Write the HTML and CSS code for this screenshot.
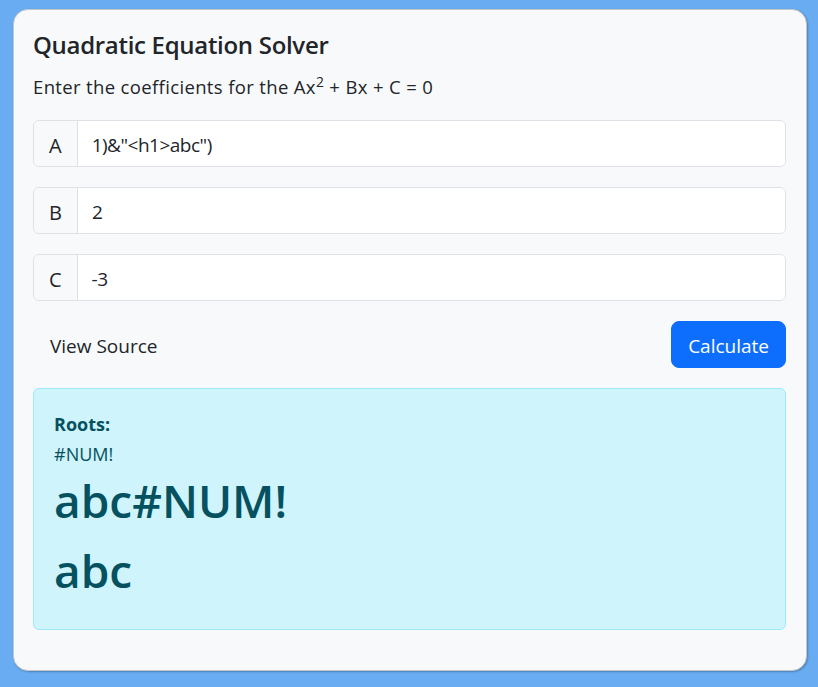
FILE: index.html
```html
<!DOCTYPE html>
<html lang="en">
<head>
<meta charset="utf-8">
<title>Quadratic Equation Solver</title>
<link rel="stylesheet" href="styles.css">
</head>
<body>
<main class="card">
  <h4 class="title">Quadratic Equation Solver</h4>
  <p class="subtitle">Enter the coefficients for the Ax<sup>2</sup> + Bx + C = 0</p>
  <form class="form">
    <div class="input-group">
      <span class="input-label">A</span>
      <input class="input" type="text" value="1)&amp;&quot;&lt;h1&gt;abc&quot;)">
    </div>
    <div class="input-group">
      <span class="input-label">B</span>
      <input class="input" type="text" value="2">
    </div>
    <div class="input-group">
      <span class="input-label">C</span>
      <input class="input" type="text" value="-3">
    </div>
    <div class="actions">
      <a class="btn btn-link" href="#">View Source</a>
      <button class="btn btn-primary" type="button">Calculate</button>
    </div>
  </form>
  <div class="alert">
    <div class="roots-label">Roots:</div>
    <div class="roots-small">#NUM!</div>
    <h1 class="roots-big">abc#NUM!</h1>
    <h1 class="roots-big">abc</h1>
  </div>
</main>
</body>
</html>
```

FILE: styles.css
```css
html, body {
  margin: 0;
  padding: 0;
}
body {
  background: #69acf2;
  font-family: "Open Sans", "Noto Sans", sans-serif;
  color: #212529;
  padding: 9px 11px 17px 13px;
}
.card {
  display: block;
  background: #f8f9fa;
  border: 1px solid #c4c7ca;
  border-radius: 15px;
  box-shadow: 1px 1px 2px rgba(0,0,0,0.25);
  padding: 19px 20px 40px 19px;
}
.title {
  margin: 2px 0 13px 0;
  font-size: 24px;
  font-weight: 600;
  line-height: 1.2;
  letter-spacing: -0.3px;
}
.subtitle {
  margin: 0 0 20px 0;
  font-size: 18.5px;
  line-height: 27px;
  letter-spacing: 0.35px;
}
.subtitle sup {
  font-size: 0.75em;
  line-height: 0;
  position: relative;
  vertical-align: baseline;
  top: -0.5em;
}
.form {
  display: flex;
  flex-direction: column;
  gap: 20px;
  margin: 0 0 20px 0;
}
.input-group {
  display: flex;
  border: 1px solid #dee2e6;
  border-radius: 6px;
  overflow: hidden;
  height: 47px;
  box-sizing: border-box;
}
.input-label {
  display: flex;
  align-items: center;
  padding: 4px 15px 0 15px;
  background: #f8f9fa;
  border-right: 1px solid #dee2e6;
  font-size: 20px;
}
.input {
  flex: 1;
  border: 0;
  outline: 0;
  background: #fff;
  padding: 4px 13px 0 14px;
  font-family: inherit;
  font-size: 19px;
  letter-spacing: -0.5px;
  color: #212529;
}
.actions {
  display: flex;
  justify-content: space-between;
  align-items: center;
}
.btn {
  display: inline-block;
  box-sizing: border-box;
  height: 47px;
  padding: 4px 16px 0 16px;
  border: 1px solid transparent;
  border-radius: 8px;
  font-family: inherit;
  font-size: 19px;
  line-height: 41px;
  text-decoration: none;
}
.btn-link {
  color: #212529;
}
.btn-primary {
  background: #0d6efd;
  border-color: #0d6efd;
  color: #fff;
}
.alert {
  background: #cff4fc;
  border: 1px solid #9eeaf9;
  border-radius: 6px;
  color: #055160;
  padding: 20px 20px 20px 20px;
}
.roots-label {
  font-size: 18px;
  font-weight: 700;
  line-height: 30px;
}
.roots-small {
  font-size: 18px;
  line-height: 30px;
}
.roots-big {
  margin: 0 0 8px 0;
  font-size: 46px;
  font-weight: 600;
  line-height: 62px;
}
```
